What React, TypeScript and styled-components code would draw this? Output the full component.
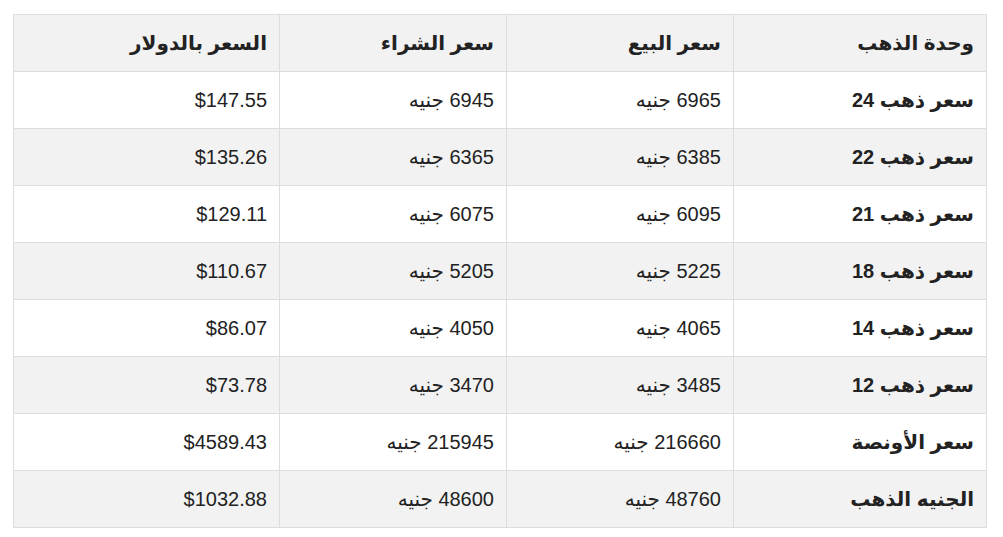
import React from "react";
import styled, { createGlobalStyle } from "styled-components";

const GlobalStyle = createGlobalStyle`
  html, body { margin: 0; padding: 0; background: #ffffff; }
  body { font-family: "Liberation Sans", "DejaVu Sans", Arial, sans-serif; color: #222; }
`;

const Page = styled.div`
  padding: 14px 17px 10px 13px;
`;

const Table = styled.table`
  direction: rtl;
  width: 973px;
  table-layout: fixed;
  border-collapse: collapse;
  font-size: 20px;
`;

const Row = styled.tr<{ $shaded?: boolean }>`
  background: ${(p) => (p.$shaded ? "#f2f2f2" : "#ffffff")};
`;

const HeadCell = styled.th`
  height: 57px;
  padding: 0 12px;
  border: 1px solid #dddddd;
  text-align: right;
  font-weight: bold;
  box-sizing: border-box;
`;

const Cell = styled.td<{ $bold?: boolean }>`
  height: 57px;
  padding: 0 12px;
  border: 1px solid #dddddd;
  text-align: right;
  font-weight: ${(p) => (p.$bold ? "bold" : "normal")};
  box-sizing: border-box;
`;

const rows = [
  ["سعر ذهب 24", "6965 جنيه", "6945 جنيه", "$147.55"],
  ["سعر ذهب 22", "6385 جنيه", "6365 جنيه", "$135.26"],
  ["سعر ذهب 21", "6095 جنيه", "6075 جنيه", "$129.11"],
  ["سعر ذهب 18", "5225 جنيه", "5205 جنيه", "$110.67"],
  ["سعر ذهب 14", "4065 جنيه", "4050 جنيه", "$86.07"],
  ["سعر ذهب 12", "3485 جنيه", "3470 جنيه", "$73.78"],
  ["سعر الأونصة", "216660 جنيه", "215945 جنيه", "$4589.43"],
  ["الجنيه الذهب", "48760 جنيه", "48600 جنيه", "$1032.88"],
];

const dollar = (v: string) => <span dir="ltr">{v}</span>;

export default function App() {
  return (
    <Page>
      <GlobalStyle />
      <Table>
        <colgroup>
          <col style={{ width: 253 }} />
          <col style={{ width: 227 }} />
          <col style={{ width: 227 }} />
          <col style={{ width: 266 }} />
        </colgroup>
        <thead>
          <Row $shaded>
            <HeadCell>وحدة الذهب</HeadCell>
            <HeadCell>سعر البيع</HeadCell>
            <HeadCell>سعر الشراء</HeadCell>
            <HeadCell>السعر بالدولار</HeadCell>
          </Row>
        </thead>
        <tbody>
          {rows.map((r, i) => (
            <Row key={i} $shaded={i % 2 === 1}>
              <Cell $bold>{r[0]}</Cell>
              <Cell>{r[1]}</Cell>
              <Cell>{r[2]}</Cell>
              <Cell>{dollar(r[3])}</Cell>
            </Row>
          ))}
        </tbody>
      </Table>
    </Page>
  );
}
